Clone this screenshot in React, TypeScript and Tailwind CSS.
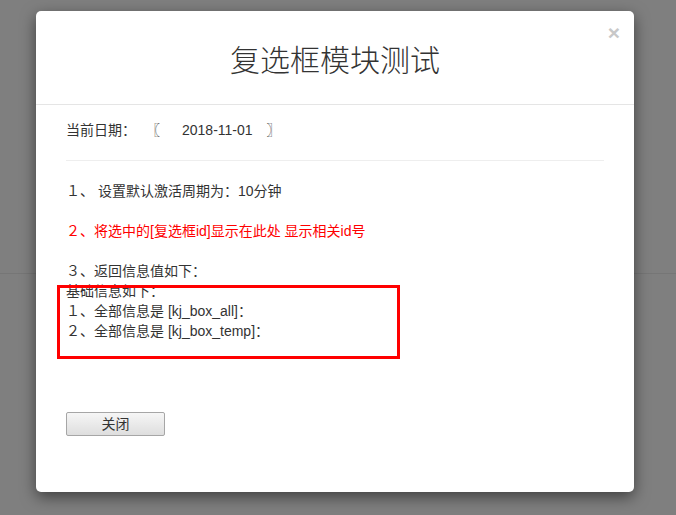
import React from "react";

const font = { fontFamily: '"Liberation Sans", "Noto Sans CJK SC", sans-serif' };

export default function App() {
  return (
    <div className="relative w-[676px] h-[515px] overflow-hidden bg-[#7f7f7f]" style={font}>
      {/* page behind the backdrop */}
      <div className="h-[274px] border-b border-[#767676]" />

      {/* modal */}
      <div className="absolute left-[36px] top-[11px] w-[598px] h-[481px] bg-white rounded-[5px] shadow-[0_5px_15px_rgba(0,0,0,0.5)] text-[#333]">
        <div className="relative h-[94px] border-b border-[#e5e5e5] flex justify-center pt-[30px]">
          <h4 className="text-[30px] leading-[40px] font-light text-[#333]">复选框模块测试</h4>
          <button className="absolute right-[14px] top-[11px] text-[21px] leading-[21px] font-bold text-[#c8c8c8]">
            ×
          </button>
        </div>

        <div className="px-[30px] pt-[15px] text-[14px] leading-[20px]">
          <div className="flex items-center">
            <span>当前日期：</span>
            <span className="ml-[10px]">〖</span>
            <span className="ml-[22px]">2018-11-01</span>
            <span className="ml-[14px]">〗</span>
          </div>

          <hr className="mt-[20px] border-t border-[#eee]" />

          <p className="mt-[20px]">１、 设置默认激活周期为：10分钟</p>
          <p className="mt-[20px] text-[#ff0000]">２、将选中的[复选框id]显示在此处 显示相关id号</p>
          <p className="mt-[20px]">３、返回信息值如下：</p>

          <div className="relative">
            <p>基础信息如下：</p>
            <p>１、全部信息是 [kj_box_all]：</p>
            <p>２、全部信息是 [kj_box_temp]：</p>
            <div className="absolute left-[-9px] top-[4px] w-[343px] h-[74px] border-[3px] border-[#ff0000]" />
          </div>

          <button className="mt-[71px] w-[99px] h-[24px] rounded-[2px] border border-[#a6a6a6] bg-gradient-to-b from-[#f6f6f6] to-[#dedede] text-[14px] leading-[20px] text-[#333]">
            关闭
          </button>
        </div>
      </div>
    </div>
  );
}
